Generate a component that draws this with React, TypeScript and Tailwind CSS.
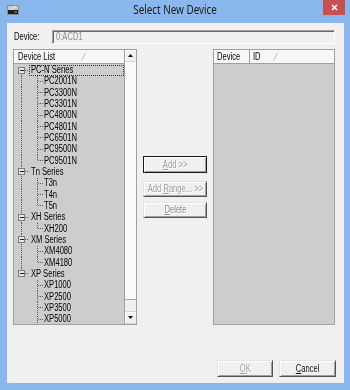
import React from 'react';

type Group = { name: string; items: string[]; focus?: boolean; more?: boolean };

const groups: Group[] = [
  { name: 'PC-N Series', focus: true, items: ['PC2001N', 'PC3300N', 'PC3301N', 'PC4800N', 'PC4801N', 'PC6501N', 'PC9500N', 'PC9501N'] },
  { name: 'Tn Series', items: ['T3n', 'T4n', 'T5n'] },
  { name: 'XH Series', items: ['XH200'] },
  { name: 'XM Series', items: ['XM4080', 'XM4180'] },
  { name: 'XP Series', items: ['XP1000', 'XP2500', 'XP3500', 'XP5000'], more: true },
];

const Txt = ({ children, className = 'origin-left' }: { children: React.ReactNode; className?: string }) => (
  <span className={`inline-block whitespace-nowrap scale-x-[0.76] ${className}`}>{children}</span>
);

const LINE = '#5a5a5a';

const GroupLines = ({ first, last }: { first: boolean; last: boolean }) => (
  <svg width="15" height="100%" className="shrink-0 overflow-visible" shapeRendering="crispEdges">
    <line x1="7.5" x2="7.5" y1={first ? '50%' : '0'} y2={last ? '50%' : '100%'} stroke={LINE} strokeDasharray="1 1" />
    <line x1="11" x2="15" y1="50%" y2="50%" stroke={LINE} strokeDasharray="1 1" />
    <g transform="translate(0 -3)">
      <rect x="4.5" y="50%" width="6" height="6" fill="#e6e6e6" stroke="#7a7a7a" />
    </g>
    <line x1="6" x2="10" y1="50%" y2="50%" stroke="#222" />
  </svg>
);

const ChildLines = ({ lastGroup, lastChild }: { lastGroup: boolean; lastChild: boolean }) => (
  <svg width="30" height="100%" className="shrink-0" shapeRendering="crispEdges">
    {!lastGroup && <line x1="7.5" x2="7.5" y1="0" y2="100%" stroke={LINE} strokeDasharray="1 1" />}
    <line x1="23.5" x2="23.5" y1="0" y2={lastChild ? '50%' : '100%'} stroke={LINE} strokeDasharray="1 1" />
    <line x1="24" x2="29" y1="50%" y2="50%" stroke={LINE} strokeDasharray="1 1" />
  </svg>
);

const SortMark = () => (
  <svg width="6" height="9" className="shrink-0">
    <line x1="0.5" y1="8.5" x2="4.5" y2="0.5" stroke="#c4c4c4" />
  </svg>
);

const btnBase =
  'flex items-center justify-center bg-[#f0f0f0] shadow-[inset_1px_1px_0_#fff,inset_-1px_-1px_0_#a0a0a0]';
const btnEdge = 'border border-t-[#e3e3e3] border-l-[#e3e3e3] border-r-[#555] border-b-[#555]';
const disabledText = 'text-[#a0a0a0] [text-shadow:1px_1px_0_#fff]';

const ScrollArrow = ({ down }: { down?: boolean }) => (
  <div className="h-[12px] flex items-center justify-center bg-[#f0f0f0] border-b border-[#d6d6d6] shadow-[inset_1px_1px_0_#fff]">
    <svg width="5" height="3">
      <polygon points={down ? '0,0 5,0 2.5,3' : '0,3 5,3 2.5,0'} fill="#111" />
    </svg>
  </div>
);

export default function App() {
  const rows: React.ReactNode[] = [];
  groups.forEach((g, gi) => {
    const lastGroup = gi === groups.length - 1;
    rows.push(
      <div key={g.name} className="h-[11.33px] flex items-stretch">
        <GroupLines first={gi === 0} last={lastGroup} />
        <div className={`flex-1 flex items-center pl-[1px] border ${g.focus ? 'border-dotted border-[#333]' : 'border-transparent'}`}>
          <Txt>{g.name}</Txt>
        </div>
      </div>
    );
    g.items.forEach((it, ii) => {
      rows.push(
        <div key={it} className="h-[11.33px] flex items-stretch">
          <ChildLines lastGroup={lastGroup} lastChild={!g.more && ii === g.items.length - 1} />
          <div className="flex items-center">
            <Txt>{it}</Txt>
          </div>
        </div>
      );
    });
  });

  return (
    <div className="w-[350px] h-[390px] bg-[#8ab8ee] flex flex-col overflow-hidden text-[10px] leading-none text-black font-['Liberation_Sans',Arial,sans-serif]">
      {/* title bar */}
      <div className="h-[23px] grid grid-cols-[1fr_auto_1fr] shrink-0">
        <div className="pl-[7px] pt-[5px]">
          <svg width="12" height="10" viewBox="0 0 12 10">
            <rect x="0" y="0" width="12" height="10" fill="#8d8d8d" />
            <rect x="1" y="1" width="10" height="4" fill="#c9c9c9" />
            <line x1="3" y1="5" x2="9" y2="1" stroke="#f4f4f4" />
            <rect x="1" y="5" width="10" height="4" fill="#1b1b1b" />
            <rect x="7" y="6" width="3" height="2" fill="#5a5a5a" />
          </svg>
        </div>
        <div className="pt-[3px] text-[13px] text-[#1a1a1a] font-['Noto_Sans',sans-serif]">
          <Txt className="origin-center">Select New Device</Txt>
        </div>
        <div className="flex justify-end pr-[5px]">
          <div className="w-[22px] h-[15px] bg-[#c75050] flex items-center justify-center">
            <svg width="7" height="7" viewBox="0 0 7 7">
              <path d="M1 1 L6 6 M6 1 L1 6" stroke="#fff" strokeWidth="1.6" />
            </svg>
          </div>
        </div>
      </div>

      {/* client area */}
      <div className="ml-[7px] mr-[6px] h-[360px] bg-[#f0f0f0] flex flex-col pl-[6px] pr-[8px]">
        <div className="mt-[7px] h-[14px] flex items-center">
          <div className="w-[39px] pl-[1px]">
            <Txt>Device:</Txt>
          </div>
          <div className="w-[283px] h-[14px] flex items-center pl-[3px] border border-t-[#a0a0a0] border-l-[#a0a0a0] border-r-[#fff] border-b-[#fff] shadow-[inset_1px_1px_0_#696969] text-[#8f8f8f]">
            <Txt>0:ACD1</Txt>
          </div>
        </div>

        <div className="mt-[5px] h-[276px] flex gap-[6px]">
          {/* device list */}
          <div className="w-[124px] border border-[#a0a0a0] flex overflow-hidden">
            <div className="flex-1 flex flex-col min-w-0">
              <div className="h-[14px] shrink-0 flex items-center gap-[14px] pl-[4px] bg-[#f7f7f7] border-b border-[#a0a0a0]">
                <Txt>Device List</Txt>
                <SortMark />
              </div>
              <div className="flex-1 bg-[#cdcdcd] overflow-hidden pt-[0.5px]">{rows}</div>
            </div>
            <div className="w-[12px] flex flex-col border-l border-[#a0a0a0] bg-[#f0f0f0]">
              <ScrollArrow />
              <div className="h-[238px] bg-[#fafafa] border-b border-[#a8a8a8]" />
              <div className="flex-1" />
              <div className="border-t border-[#d6d6d6]">
                <ScrollArrow down />
              </div>
            </div>
          </div>

          {/* buttons */}
          <div className="w-[64px] flex flex-col pt-[107px]">
            <div className={`${btnBase} ${disabledText} h-[17px] border border-[#1a1a1a]`}>
              <Txt className="origin-center">
                <u>A</u>dd &gt;&gt;
              </Txt>
            </div>
            <div className={`${btnBase} ${btnEdge} ${disabledText} h-[16px] mt-[8px]`}>
              <Txt className="origin-center">
                Add <u>R</u>ange... &gt;&gt;
              </Txt>
            </div>
            <div className={`${btnBase} ${btnEdge} h-[16px] mt-[5px] text-[#8c8c8c] [text-shadow:1px_1px_0_#fff]`}>
              <Txt className="origin-center">
                <u>D</u>elete
              </Txt>
            </div>
          </div>

          {/* selected devices */}
          <div className="w-[122px] border border-[#a0a0a0] flex flex-col">
            <div className="h-[14px] shrink-0 flex bg-[#f7f7f7] border-b border-[#a0a0a0]">
              <div className="w-[36px] flex items-center pl-[3px] border-r border-[#a0a0a0]">
                <Txt>Device</Txt>
              </div>
              <div className="flex-1 flex items-center gap-[10px] pl-[3px]">
                <Txt>ID</Txt>
                <SortMark />
              </div>
            </div>
            <div className="flex-1 bg-[#cdcdcd]" />
          </div>
        </div>

        <div className="mt-[35px] flex justify-end gap-[6px]">
          <div className={`${btnBase} ${btnEdge} ${disabledText} w-[56px] h-[17px]`}>
            <Txt className="origin-center">
              <u>O</u>K
            </Txt>
          </div>
          <div className={`${btnBase} ${btnEdge} w-[57px] h-[17px] text-[#111]`}>
            <Txt className="origin-center">
              <u>C</u>ancel
            </Txt>
          </div>
        </div>
      </div>
    </div>
  );
}
